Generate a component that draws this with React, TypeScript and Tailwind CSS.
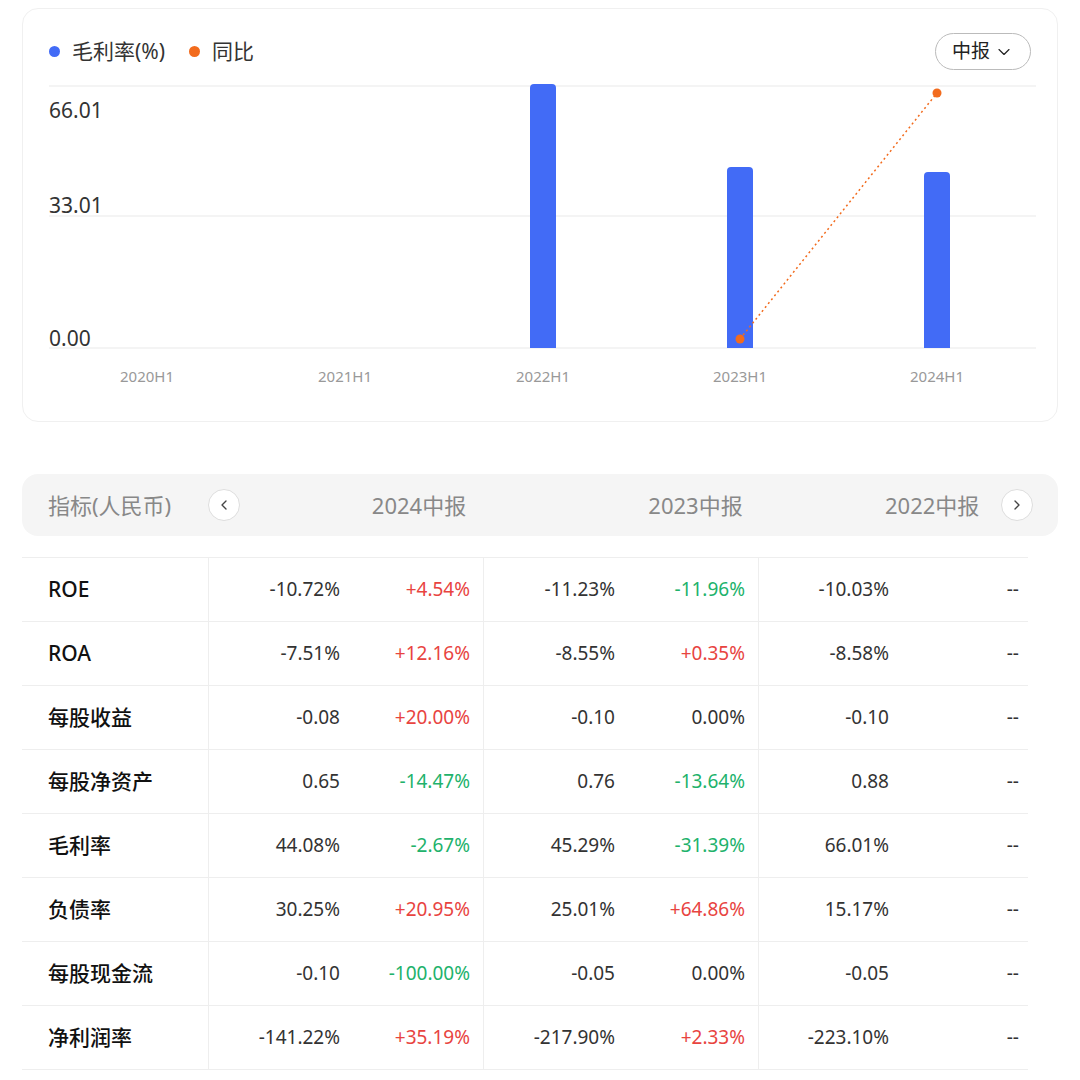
import { ChevronDown, ChevronLeft, ChevronRight } from 'lucide-react';

const FONT = { fontFamily: '"Noto Sans", "Noto Sans CJK SC", sans-serif' };

type Row = { name: string; cells: [string, string, string, string, string, string] };

const rows: Row[] = [
  { name: 'ROE', cells: ['-10.72%', '+4.54%', '-11.23%', '-11.96%', '-10.03%', '--'] },
  { name: 'ROA', cells: ['-7.51%', '+12.16%', '-8.55%', '+0.35%', '-8.58%', '--'] },
  { name: '每股收益', cells: ['-0.08', '+20.00%', '-0.10', '0.00%', '-0.10', '--'] },
  { name: '每股净资产', cells: ['0.65', '-14.47%', '0.76', '-13.64%', '0.88', '--'] },
  { name: '毛利率', cells: ['44.08%', '-2.67%', '45.29%', '-31.39%', '66.01%', '--'] },
  { name: '负债率', cells: ['30.25%', '+20.95%', '25.01%', '+64.86%', '15.17%', '--'] },
  { name: '每股现金流', cells: ['-0.10', '-100.00%', '-0.05', '0.00%', '-0.05', '--'] },
  { name: '净利润率', cells: ['-141.22%', '+35.19%', '-217.90%', '+2.33%', '-223.10%', '--'] },
];

function changeColor(v: string) {
  if (v.startsWith('+')) return 'text-[#e8443f]';
  if (v.startsWith('-') && v !== '--') return 'text-[#21b26b]';
  return 'text-[#333]';
}

function Chart() {
  const cats = [
    { label: '2020H1', x: 124 },
    { label: '2021H1', x: 322 },
    { label: '2022H1', x: 520, top: 62 },
    { label: '2023H1', x: 717, top: 145 },
    { label: '2024H1', x: 914, top: 150 },
  ];
  return (
    <svg width="1040" height="380" className="block">
      {[0, 130, 262].map((y) => (
        <line key={y} x1="26" x2="1013" y1={64 + y} y2={64 + y} stroke="#f0f0f0" strokeWidth="1.5" />
      ))}
      <text x="26" y="96" fontSize="21" fill="#333" style={FONT}>66.01</text>
      <text x="26" y="191" fontSize="21" fill="#333" style={FONT}>33.01</text>
      <text x="26" y="324" fontSize="21" fill="#333" style={FONT}>0.00</text>
      {cats.map((c) =>
        c.top !== undefined ? (
          <path
            key={c.label + 'b'}
            d={`M${c.x - 13} 326 V${c.top + 4} Q${c.x - 13} ${c.top} ${c.x - 9} ${c.top} H${c.x + 9} Q${c.x + 13} ${c.top} ${c.x + 13} ${c.top + 4} V326 Z`}
            fill="#426bf6"
          />
        ) : null
      )}
      {cats.map((c) => (
        <text key={c.label} x={c.x} y="360" fontSize="15" fill="#999" textAnchor="middle" style={FONT}>
          {c.label}
        </text>
      ))}
      <line x1="717" y1="317" x2="914" y2="71" stroke="#f26b1d" strokeWidth="1.5" strokeDasharray="2 3" />
      <circle cx="717" cy="317" r="4.5" fill="#f26b1d" />
      <circle cx="914" cy="71" r="4.5" fill="#f26b1d" />
    </svg>
  );
}

export default function App() {
  return (
    <div className="w-[1080px] h-[1080px] bg-white overflow-hidden" style={FONT}>
      <div className="mx-[22px] mt-2 h-[414px] rounded-2xl border border-[#f0f0f0] relative">
        <div className="flex items-center justify-between pl-[26px] pr-[26px] pt-[24px]">
          <div className="flex items-center gap-6 text-[21px] text-[#333]">
            <div className="flex items-center gap-3">
              <span className="w-[11px] h-[11px] rounded-full bg-[#426bf6]" />
              毛利率(%)
            </div>
            <div className="flex items-center gap-3">
              <span className="w-[11px] h-[11px] rounded-full bg-[#f26b1d]" />
              同比
            </div>
          </div>
          <div className="flex items-center gap-1 h-[37px] px-4 rounded-full border border-[#bbb] text-[19px] text-[#222]">
            中报
            <ChevronDown className="w-5 h-5" strokeWidth={1.4} />
          </div>
        </div>
        <div className="absolute left-0 top-[13px]">
          <Chart />
        </div>
      </div>

      <div className="mx-[22px] mt-[52px] h-[62px] rounded-2xl bg-[#f5f5f5] flex items-center text-[22px] text-[#888] relative overflow-hidden">
        <span className="pl-[26px] w-[186px]">指标(人民币)</span>
        <span className="w-[32px] h-[32px] rounded-full bg-white border border-[#ddd] flex items-center justify-center">
          <ChevronLeft className="w-4 h-4 text-[#444]" />
        </span>
        <span className="w-[318px] text-center pl-[40px]">2024中报</span>
        <span className="w-[275px] text-center">2023中报</span>
        <span className="pl-[52px] whitespace-nowrap">2022中报</span>
        <span className="absolute right-[25px] w-[32px] h-[32px] rounded-full bg-white border border-[#ddd] flex items-center justify-center">
          <ChevronRight className="w-4 h-4 text-[#444]" />
        </span>
      </div>

      <div className="ml-[22px] w-[1006px] mt-[21px] border-t border-[#eee]">
        {rows.map((r) => (
          <div key={r.name} className="flex h-[64px] border-b border-[#eee] items-center text-[19px]">
            <div className="w-[186px] pl-[26px] text-[21px] font-medium text-[#111]">{r.name}</div>
            <div className="flex h-full border-l border-[#eee] w-[275px]">
              <div className="w-[131px] flex items-center justify-end text-[#333]">{r.cells[0]}</div>
              <div className={`w-[130px] flex items-center justify-end ${changeColor(r.cells[1])}`}>{r.cells[1]}</div>
            </div>
            <div className="flex h-full border-l border-[#eee] w-[275px]">
              <div className="w-[131px] flex items-center justify-end text-[#333]">{r.cells[2]}</div>
              <div className={`w-[130px] flex items-center justify-end ${changeColor(r.cells[3])}`}>{r.cells[3]}</div>
            </div>
            <div className="flex h-full border-l border-[#eee] w-[270px]">
              <div className="w-[130px] flex items-center justify-end text-[#333]">{r.cells[4]}</div>
              <div className="w-[130px] flex items-center justify-end text-[#333]">{r.cells[5]}</div>
            </div>
          </div>
        ))}
      </div>
    </div>
  );
}
